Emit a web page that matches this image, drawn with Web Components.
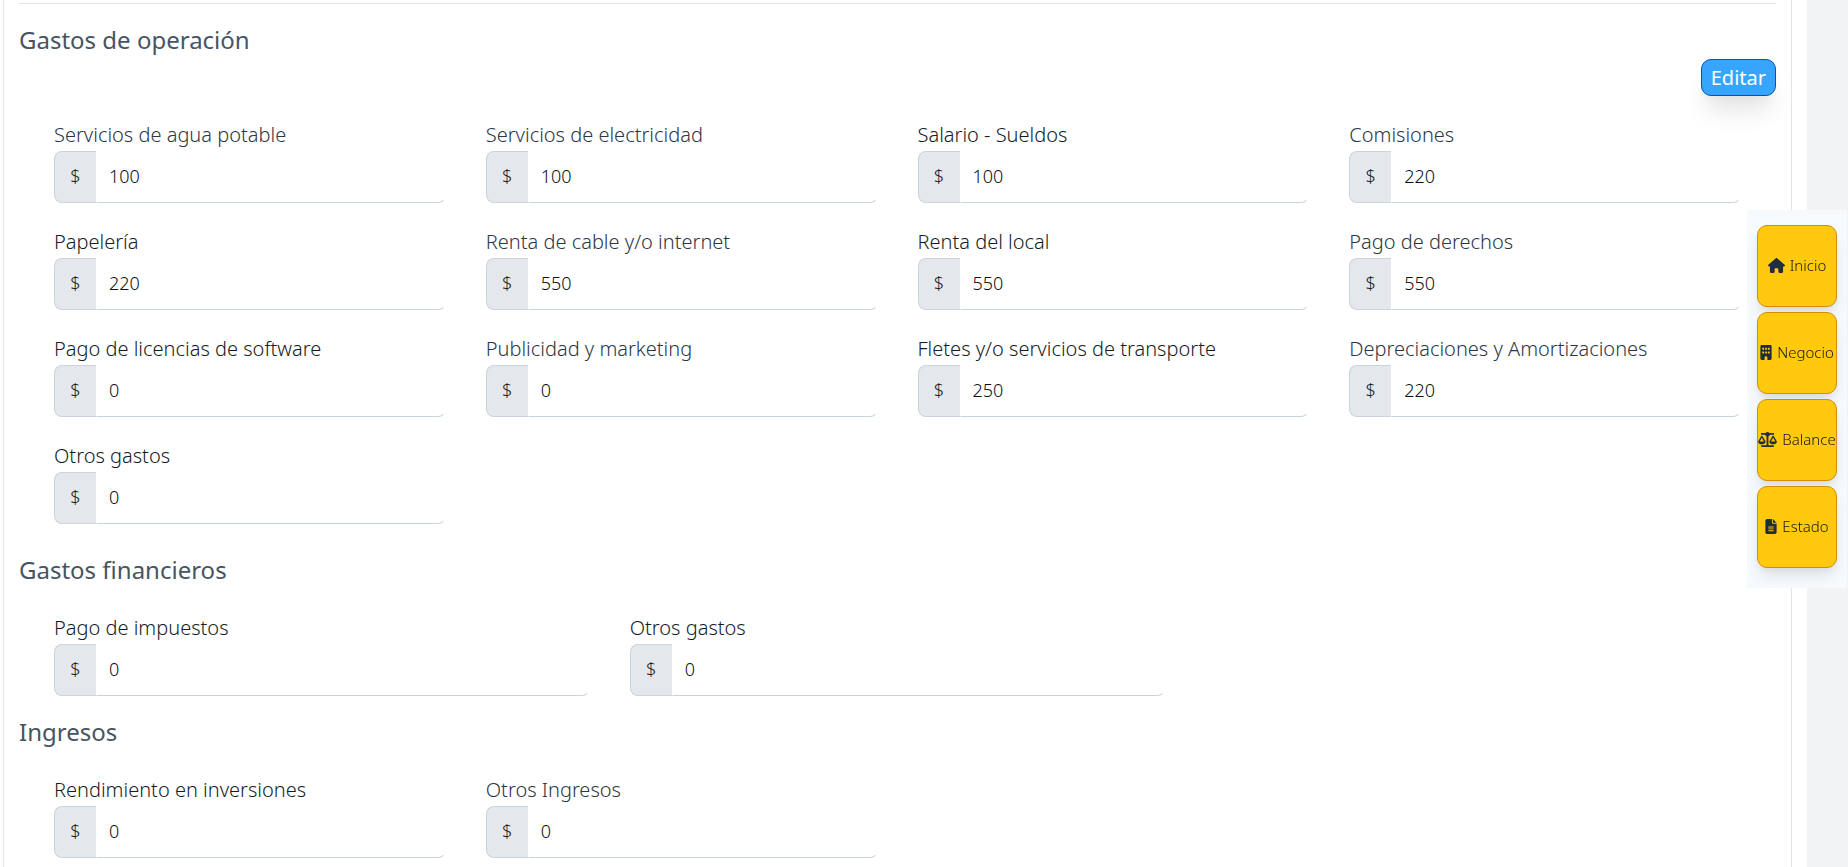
<!DOCTYPE html>
<html lang="es">
<head>
<meta charset="utf-8">
<meta name="viewport" content="width=device-width, initial-scale=1">
<title>Gastos e ingresos</title>
<style>
  body {
    margin: 0;
    min-height: 100vh;
    background: #f2f3f5;
    color: #16191c;
    font-family: "Noto Sans", "Open Sans", sans-serif;
    font-weight: 300;
    overflow-x: hidden;
  }
</style>
</head>
<body>

<finance-panel>
  <expense-section heading="Gastos de operación" columns="4" spaced>
    <edit-button slot="action">Editar</edit-button>
    <money-field value="100" muted>Servicios de agua potable</money-field>
    <money-field value="100" muted>Servicios de electricidad</money-field>
    <money-field value="100">Salario - Sueldos</money-field>
    <money-field value="220" muted>Comisiones</money-field>
    <money-field value="220">Papelería</money-field>
    <money-field value="550" muted>Renta de cable y/o internet</money-field>
    <money-field value="550">Renta del local</money-field>
    <money-field value="550" muted>Pago de derechos</money-field>
    <money-field value="0">Pago de licencias de software</money-field>
    <money-field value="0" muted>Publicidad y marketing</money-field>
    <money-field value="250">Fletes y/o servicios de transporte</money-field>
    <money-field value="220" muted>Depreciaciones y Amortizaciones</money-field>
    <money-field value="0">Otros gastos</money-field>
  </expense-section>

  <expense-section heading="Gastos financieros" columns="3">
    <money-field value="0">Pago de impuestos</money-field>
    <money-field value="0">Otros gastos</money-field>
  </expense-section>

  <expense-section heading="Ingresos" columns="4">
    <money-field value="0">Rendimiento en inversiones</money-field>
    <money-field value="0" muted>Otros Ingresos</money-field>
  </expense-section>
</finance-panel>

<quick-nav>
  <quick-link icon="house" href="#inicio">Inicio</quick-link>
  <quick-link icon="building" href="#negocio">Negocio</quick-link>
  <quick-link icon="scale" href="#balance">Balance</quick-link>
  <quick-link icon="file" href="#estado">Estado</quick-link>
</quick-nav>

<script>
/**
 * White page column with the bordered card inside it
 */
class FinancePanel extends HTMLElement {
  constructor() {
    super();
    this.attachShadow({ mode: 'open' });
  }

  connectedCallback() {
    this.shadowRoot.innerHTML = `
      <style>
        :host {
          display: block;
          box-sizing: border-box;
          min-height: 100vh;
          margin-right: 41px;
          padding: 0 15px 0 3px;
          background: #fff;
        }

        .card {
          box-sizing: border-box;
          min-height: 100vh;
          padding: 3px 15px 8px;
          border: solid #dee5ec;
          border-width: 0 1px;
        }

        hr {
          height: 1px;
          margin: 0;
          border: 0;
          background: #e3e6ea;
        }
      </style>
      <main class="card">
        <hr>
        <slot></slot>
      </main>
    `;
  }
}

/**
 * Titled group of money fields laid out in a grid
 */
class ExpenseSection extends HTMLElement {
  constructor() {
    super();
    this.attachShadow({ mode: 'open' });
  }

  connectedCallback() {
    const columns = this.getAttribute('columns') || '4';

    this.shadowRoot.innerHTML = `
      <style>
        :host {
          display: block;
          padding-top: 21px;
        }

        :host([spaced]) {
          padding-bottom: 10px;
        }

        h2 {
          margin: 0 0 4px;
          color: #475561;
          font-size: 24px;
          font-weight: 400;
          line-height: 30px;
        }

        .actions {
          display: flex;
          justify-content: flex-end;
        }

        .grid {
          display: grid;
          grid-template-columns: repeat(${columns}, minmax(0, 1fr));
          row-gap: 25px;
          padding: 25px 15px 0;
        }

        @media (max-width: 900px) {
          .grid {
            grid-template-columns: minmax(0, 1fr);
          }
        }
      </style>
      <section>
        <h2>${this.getAttribute('heading')}</h2>
        <div class="actions"><slot name="action"></slot></div>
        <div class="grid"><slot></slot></div>
      </section>
    `;
  }
}

class MoneyField extends HTMLElement {
  constructor() {
    super();
    this.attachShadow({ mode: 'open' });
  }

  connectedCallback() {
    this.shadowRoot.innerHTML = `
      <style>
        :host {
          display: block;
          padding: 0 20px;
        }

        label {
          display: block;
          padding-bottom: 2px;
          color: #141c28;
          font-size: 20px;
          line-height: 28px;
          white-space: nowrap;
        }

        :host([muted]) label {
          color: #2d3645;
        }

        .group {
          display: flex;
          height: 52px;
          font-size: 18px;
        }

        .prefix {
          display: flex;
          align-items: center;
          justify-content: center;
          box-sizing: border-box;
          width: 42px;
          padding-bottom: 2px;
          border: 1px solid #cdd3da;
          border-right: 0;
          border-radius: 8px 0 0 8px;
          background: #e4e7eb;
        }

        input {
          flex: 1;
          box-sizing: border-box;
          min-width: 0;
          padding: 0 12px 2px;
          border: 1px solid transparent;
          border-bottom-color: #c8d3df;
          border-radius: 0 8px 8px 0;
          outline: 0;
          background: #fff;
          color: #0c0e10;
          font: inherit;
        }

        input:focus {
          border-color: #37a5fd;
        }
      </style>
      <label for="amount"><slot></slot></label>
      <div class="group">
        <span class="prefix">$</span>
        <input id="amount" type="text" inputmode="decimal" value="${this.getAttribute('value')}">
      </div>
    `;
  }
}

class EditButton extends HTMLElement {
  constructor() {
    super();
    this.attachShadow({ mode: 'open' });
  }

  connectedCallback() {
    this.shadowRoot.innerHTML = `
      <style>
        :host {
          display: block;
        }

        button {
          display: block;
          height: 37px;
          padding: 0 9px;
          border: 1px solid #0a4fb5;
          border-radius: 10px;
          background: #36a5fd;
          box-shadow: 0 20px 25px -5px rgba(0, 0, 0, 0.1), 0 10px 10px -5px rgba(0, 0, 0, 0.04);
          color: #fff;
          font: inherit;
          font-size: 20px;
          font-weight: 400;
          cursor: pointer;
        }
      </style>
      <button type="button"><slot></slot></button>
    `;
  }
}

/**
 * Floating shortcut bar on the right edge of the window
 */
class QuickNav extends HTMLElement {
  constructor() {
    super();
    this.attachShadow({ mode: 'open' });
  }

  connectedCallback() {
    this.shadowRoot.innerHTML = `
      <style>
        :host {
          display: block;
          position: fixed;
          top: 210px;
          right: 1px;
          box-sizing: border-box;
          width: 100px;
          padding: 15px 10px 20px;
          background: #f7fafc;
        }

        nav {
          display: grid;
          gap: 5px;
        }
      </style>
      <nav aria-label="Accesos"><slot></slot></nav>
    `;
  }
}

const ICONS = {
  house: {
    box: '0 0 576 512',
    width: 17,
    path: 'M575.8 255.5c0 18-15 32.1-32 32.1h-32l.7 160.2c0 2.7-.2 5.4-.5 8.1V472c0 22.1-17.9 40-40 40H392c-22.1 0-40-17.9-40-40V384c0-17.7-14.3-32-32-32H256c-17.7 0-32 14.3-32 32v88c0 22.1-17.9 40-40 40H104c-22.1 0-40-17.9-40-40V287.6H32c-18 0-32-14-32-32.1c0-9 3-17 10-24L266.4 8c7-7 15-8 22-8s15 2 21 7L564.8 231.5c8 7 12 15 11 24z',
  },
  building: {
    box: '0 0 384 512',
    width: 12,
    path: 'M48 0C21.5 0 0 21.5 0 48V464c0 26.5 21.5 48 48 48h96V432c0-26.5 21.5-48 48-48s48 21.5 48 48v80h96c26.5 0 48-21.5 48-48V48c0-26.5-21.5-48-48-48H48z'
      + [96, 224].map((y) => [64, 160, 256].map((x) => `M${x} ${y + 16}c0-8.8 7.2-16 16-16h32c8.8 0 16 7.2 16 16v32c0 8.8-7.2 16-16 16h-32c-8.8 0-16-7.2-16-16z`).join('')).join(''),
  },
  scale: {
    box: '0 0 640 512',
    width: 19,
    path: 'M384 32H512c17.7 0 32 14.3 32 32s-14.3 32-32 32H398.4c-5.2 25.8-22.9 47.1-46.4 57.3V448H512c17.7 0 32 14.3 32 32s-14.3 32-32 32H128c-17.7 0-32-14.3-32-32s14.3-32 32-32H288V153.3c-23.5-10.3-41.2-31.6-46.4-57.3H128c-17.7 0-32-14.3-32-32s14.3-32 32-32H256c14.6-19.4 37.8-32 64-32s49.4 12.6 64 32zm55.6 288H584.4L512 195.8 439.6 320zM512 416c-62.9 0-115.2-34-126-78.9c-2.6-11 1-22.3 6.7-32.1l95.2-163.2c5-8.6 14.2-13.8 24.1-13.8s19.1 5.3 24.1 13.8l95.2 163.2c5.7 9.8 9.3 21.1 6.7 32.1C627.2 382 574.9 416 512 416zM126.8 195.8L54.4 320H199.3L126.8 195.8zM.9 337.1c-2.6-11 1-22.3 6.7-32.1l95.2-163.2c5-8.6 14.2-13.8 24.1-13.8s19.1 5.3 24.1 13.8l95.2 163.2c5.7 9.8 9.3 21.1 6.7 32.1C242 382 189.7 416 126.8 416S11.7 382 .9 337.1z',
  },
  file: {
    box: '0 0 384 512',
    width: 12,
    path: 'M64 0C28.7 0 0 28.7 0 64V448c0 35.3 28.7 64 64 64H320c35.3 0 64-28.7 64-64V160H256c-17.7 0-32-14.3-32-32V0H64zM256 0V128H384L256 0z'
      + [256, 320, 384].map((y) => `M112 ${y}H272c8.8 0 16 7.2 16 16s-7.2 16-16 16H112c-8.8 0-16-7.2-16-16s7.2-16 16-16z`).join(''),
  },
};

class QuickLink extends HTMLElement {
  constructor() {
    super();
    this.attachShadow({ mode: 'open' });
  }

  connectedCallback() {
    const icon = ICONS[this.getAttribute('icon')];

    this.shadowRoot.innerHTML = `
      <style>
        :host {
          display: block;
        }

        a {
          display: flex;
          align-items: center;
          justify-content: center;
          gap: 5px;
          box-sizing: border-box;
          height: 82px;
          padding-bottom: 2px;
          border: 1px solid #d48c0c;
          border-radius: 10px;
          background: #ffc90e;
          box-shadow: 0 10px 15px -3px rgba(0, 0, 0, 0.1), 0 4px 6px -2px rgba(0, 0, 0, 0.05);
          color: #16191c;
          font-size: 15px;
          text-decoration: none;
          white-space: nowrap;
        }

        svg {
          flex: none;
          height: 15px;
          fill: #1f2d3d;
        }
      </style>
      <a href="${this.getAttribute('href')}">
        <svg viewBox="${icon.box}" width="${icon.width}" aria-hidden="true"><path fill-rule="evenodd" d="${icon.path}"/></svg>
        <span><slot></slot></span>
      </a>
    `;
  }
}

customElements.define('finance-panel', FinancePanel);
customElements.define('expense-section', ExpenseSection);
customElements.define('money-field', MoneyField);
customElements.define('edit-button', EditButton);
customElements.define('quick-nav', QuickNav);
customElements.define('quick-link', QuickLink);
</script>
</body>
</html>
